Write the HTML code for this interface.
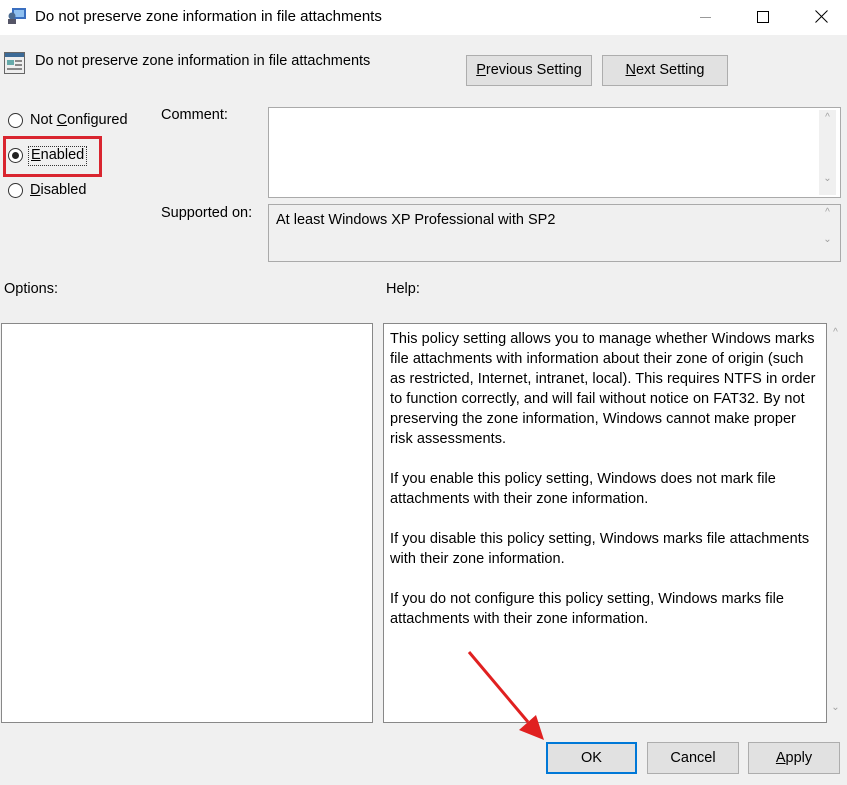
<!DOCTYPE html>
<html><head><style>
*{margin:0;padding:0;box-sizing:border-box}
body{width:847px;height:785px;background:#f0f0f0;font-family:"Liberation Sans",sans-serif;font-size:14px;color:#000;position:relative;overflow:hidden}
.a{position:absolute;white-space:nowrap}
.btn{position:absolute;background:#e1e1e1;border:1px solid #adadad;text-align:center;line-height:29px;font-size:14.5px}
.box{position:absolute;background:#fff;border:1px solid #7a7a7a}
.radio{position:absolute;width:15px;height:15px;border:1px solid #333;border-radius:50%;background:#fff}
.sb{position:absolute;width:17px;background:#f0f0f0;color:#a0a0a0;font-size:10px;text-align:center}
</style></head><body>
<div class="a" style="left:0;top:0;width:847px;height:35px;background:#fff"></div>
<svg class="a" style="left:7px;top:7px" width="20" height="18"><rect x="5" y="1" width="14" height="11" fill="#3a6fc0"/><rect x="7" y="3" width="10" height="7" fill="#8fc0f0"/><circle cx="5" cy="9" r="3.5" fill="#4a6a90"/><rect x="1" y="12" width="8" height="5" fill="#556"/></svg>
<div class="a" style="left:35px;top:8px;font-size:15px">Do not preserve zone information in file attachments</div>
<div class="a" style="left:700px;top:17px;width:11px;height:1px;background:#999"></div>
<div class="a" style="left:757px;top:11px;width:12px;height:12px;border:1px solid #000"></div>
<svg class="a" style="left:815px;top:10px" width="13" height="13"><path d="M0.5 0.5L12.5 12.5M12.5 0.5L0.5 12.5" stroke="#000" stroke-width="1"/></svg>
<svg class="a" style="left:4px;top:52px" width="21" height="22"><rect x="0.5" y="0.5" width="20" height="21" fill="#eee" stroke="#666"/><rect x="1" y="1" width="19" height="4" fill="#3c6a96"/><rect x="3" y="8" width="7" height="5" fill="#6aa"/><rect x="11" y="8" width="7" height="2" fill="#888"/><rect x="11" y="12" width="7" height="2" fill="#888"/><rect x="3" y="16" width="15" height="2" fill="#888"/></svg>
<div class="a" style="left:35px;top:53px;font-size:14.5px">Do not preserve zone information in file attachments</div>
<div class="btn" style="left:466px;top:55px;width:126px;height:31px"><u>P</u>revious Setting</div>
<div class="btn" style="left:602px;top:55px;width:126px;height:31px"><u>N</u>ext Setting</div>

<div class="radio" style="left:8px;top:113px"></div>
<div class="a" style="left:30px;top:112px;font-size:14.5px">Not <u>C</u>onfigured</div>
<div class="radio" style="left:8px;top:148px"><div style="position:absolute;left:3px;top:3px;width:7px;height:7px;border-radius:50%;background:#222"></div></div>
<div class="a" style="left:28px;top:146px;border:1px dotted #333;padding:0 2px;font-size:14.5px;height:20px"><u>E</u>nabled</div>
<div class="a" style="left:3px;top:136px;width:99px;height:41px;border:3px solid #d9252f"></div>
<div class="radio" style="left:8px;top:183px"></div>
<div class="a" style="left:30px;top:182px;font-size:14.5px"><u>D</u>isabled</div>

<div class="a" style="left:161px;top:107px;font-size:14.5px">Comment:</div>
<div class="box" style="left:268px;top:107px;width:573px;height:91px;border-color:#aaa"></div>
<div class="sb" style="left:819px;top:110px;height:85px"><div style="margin-top:2px">^</div><div style="margin-top:50px">⌄</div></div>
<div class="a" style="left:161px;top:205px;font-size:14.5px">Supported on:</div>
<div class="a" style="left:268px;top:204px;width:573px;height:58px;border:1px solid #aaa;background:#f0f0f0"></div>
<div class="a" style="left:276px;top:212px;font-size:14.5px">At least Windows XP Professional with SP2</div>
<div class="sb" style="left:819px;top:207px;height:52px"><div>^</div><div style="margin-top:16px">⌄</div></div>

<div class="a" style="left:4px;top:281px;font-size:14.5px">Options:</div>
<div class="a" style="left:386px;top:281px;font-size:14.5px">Help:</div>
<div class="box" style="left:1px;top:323px;width:372px;height:400px;border-color:#888"></div>
<div class="box" style="left:383px;top:323px;width:444px;height:400px;border-color:#888"></div>
<div class="sb" style="left:827px;top:325px;height:396px"><div style="margin-top:2px">^</div><div style="margin-top:364px">⌄</div></div>
<div class="a" style="left:390px;top:329px;font-size:14.5px;line-height:20px;letter-spacing:0.05px">This policy setting allows you to manage whether Windows marks<br>file attachments with information about their zone of origin (such<br>as restricted, Internet, intranet, local). This requires NTFS in order<br>to function correctly, and will fail without notice on FAT32. By not<br>preserving the zone information, Windows cannot make proper<br>risk assessments.<br><br>If you enable this policy setting, Windows does not mark file<br>attachments with their zone information.<br><br>If you disable this policy setting, Windows marks file attachments<br>with their zone information.<br><br>If you do not configure this policy setting, Windows marks file<br>attachments with their zone information.</div>

<div class="btn" style="left:546px;top:742px;width:91px;height:32px;border:2px solid #0078d7;line-height:28px">OK</div>
<div class="btn" style="left:647px;top:742px;width:92px;height:32px;line-height:30px">Cancel</div>
<div class="btn" style="left:748px;top:742px;width:92px;height:32px;line-height:30px"><u>A</u>pply</div>

<svg class="a" style="left:0;top:0" width="847" height="785"><line x1="469" y1="652" x2="528" y2="722" stroke="#e02020" stroke-width="3"/><polygon points="544,740 519,730 536,715" fill="#e02020"/></svg>
</body></html>
